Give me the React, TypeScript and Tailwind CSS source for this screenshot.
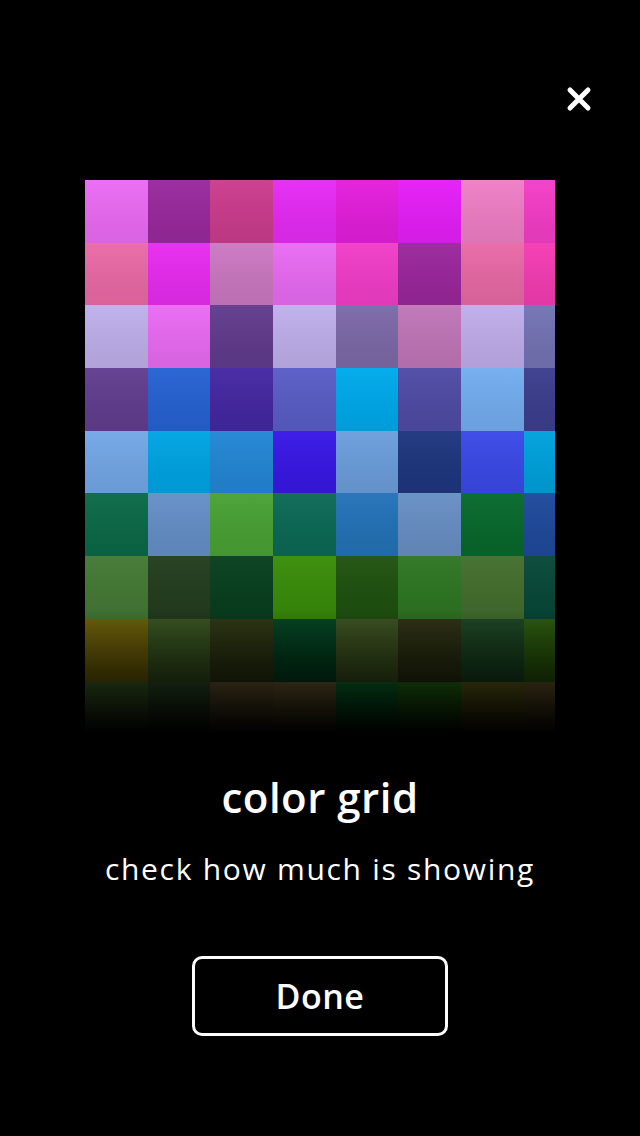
const rows: string[][] = [
  ["#ec6cf5", "#9a2a9e", "#cc3d8e", "#e62cf5", "#e41fdc", "#e61ff8", "#f07fc6", "#f53ec8"],
  ["#ea6ba6", "#e82df0", "#cc79c2", "#e96cf4", "#f23ec9", "#9b289c", "#e96aa7", "#f53db4"],
  ["#c0b0ec", "#ea6cf3", "#623c8d", "#c0b0ec", "#7d6aa9", "#c177b8", "#c0aeeb", "#7574b5"],
  ["#633e90", "#2763d3", "#4528a3", "#5a5ec7", "#00aaec", "#504ca6", "#74aef0", "#3d3f8f"],
  ["#74a8e8", "#00a5e4", "#2487d6", "#3918e6", "#6c9fdc", "#1f3780", "#3b4ae8", "#00a2dd"],
  ["#0c6a48", "#6690c8", "#4aa235", "#0c6a56", "#2473b8", "#6890c4", "#086a2d", "#1f4a9c"],
  ["#457a36", "#253e1f", "#08401f", "#3a8d0a", "#205310", "#2f7724", "#446f2e", "#08493a"],
  ["#6a5c05", "#34501c", "#2a3310", "#00401e", "#394f1c", "#2a2e10", "#18421f", "#27560a"],
  ["#3b5c1f", "#284620", "#61502a", "#675826", "#006a23", "#1d690b", "#5c5811", "#635023"],
];

const CloseIcon = () => (
  <svg width="26" height="26" viewBox="0 0 26 26" fill="none">
    <path d="M4 4L22 22M22 4L4 22" stroke="white" strokeWidth="5" strokeLinecap="round" />
  </svg>
);

export default function App() {
  return (
    <div className="min-h-[1136px] w-full bg-black flex flex-col items-center font-['Open_Sans','Noto_Sans',sans-serif] text-white">
      <div className="w-full flex justify-end pr-[48px] pt-[86px]">
        <button className="w-[26px] h-[26px]">
          <CloseIcon />
        </button>
      </div>

      <div className="relative mt-[68px] w-[470px] grid grid-cols-[repeat(7,62.7px)_31.1px] grid-rows-[repeat(9,62.7px)]">
        {rows.map((row, r) =>
          row.map((c, i) => (
            <div key={r + "-" + i} className="relative" style={{ backgroundColor: c }}>
              <div className="absolute inset-0 bg-linear-to-b from-white/3 to-black/8" />
            </div>
          ))
        )}
        <div className="absolute inset-0 bg-linear-to-b from-transparent from-[76%] to-black to-[98%]" />
      </div>

      <h1 className="mt-[27px] text-[42px] leading-[52px] font-semibold tracking-[0.5px]">color grid</h1>
      <p className="mt-[26px] text-[30px] leading-[40px] tracking-[1.7px]">check how much is showing</p>

      <button className="mt-[67px] w-[256px] h-[80px] rounded-[10px] border-[3px] border-white flex items-center justify-center">
        <span className="text-[34px] font-semibold tracking-[0.5px]">Done</span>
      </button>
    </div>
  );
}
